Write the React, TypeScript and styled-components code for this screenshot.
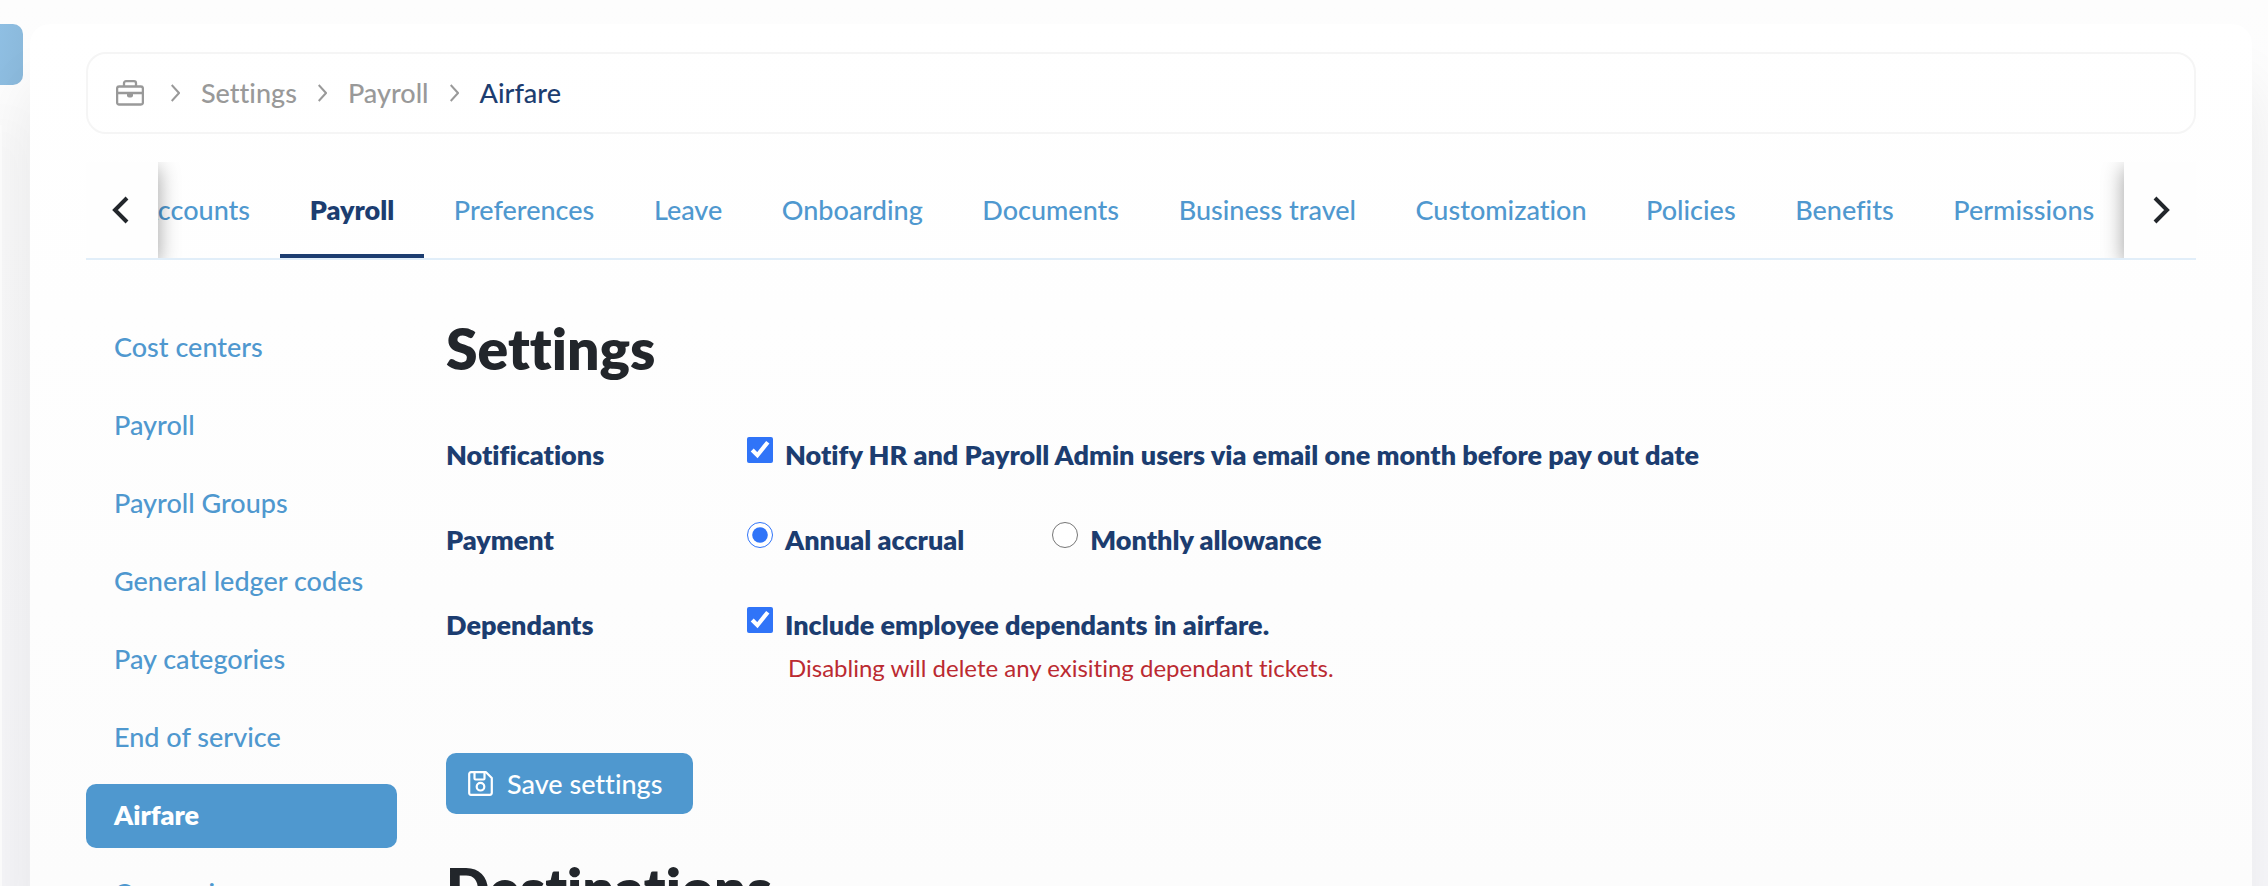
import React from "react";
import styled, { createGlobalStyle, css } from "styled-components";

const color = {
  blue: "#4f98cf",
  navy: "#1c3d70",
  ink: "#22262b",
  grey: "#999999",
  red: "#bb2a31",
  accent: "#3074f8",
};

const GlobalStyle = createGlobalStyle`
  *, *::before, *::after { box-sizing: border-box; }
  body {
    margin: 0;
    font-family: Lato, "Liberation Sans", sans-serif;
    font-size: 27px;
    font-weight: 500;
    font-variant-ligatures: no-common-ligatures;
    line-height: 36px;
    color: ${color.navy};
  }
  a { color: inherit; text-decoration: none; }
  button { font: inherit; font-variant-ligatures: inherit; border: 0; padding: 0; cursor: pointer; }
`;

const Page = styled.div`
  height: 100vh;
  padding-top: 24px;
  overflow: hidden;
  display: flex;
  background: linear-gradient(#fdfdfd, #f9f9fc);
`;

const Workspace = styled.div`
  flex: 1;
  min-width: 0;
  display: flex;
  gap: 7px;
  padding-right: 16px;
  overflow: hidden;
`;

const Rail = styled.aside`
  flex: none;
  width: 23px;
  display: flex;
  flex-direction: column;
  gap: 40px;
`;

const RailButton = styled.button`
  position: relative;
  flex: none;
  height: 61px;
  border-radius: 0 10px 10px 0;
  background: linear-gradient(100deg, #8fbfe3, #8ab8da);
`;

const RailPanel = styled.div`
  flex: 1;
  width: 2px;
  background: #fdfdfd;
  box-shadow: 0 20px 50px 20px rgba(0, 0, 0, 0.03);
`;

const Card = styled.main`
  position: relative;
  flex: 1;
  min-width: 0;
  padding: 28px 56px;
  border-radius: 20px 20px 0 0;
  background: linear-gradient(#ffffff, #fcfcfc);
  box-shadow: 0 60px 60px rgba(0, 0, 0, 0.08);
`;

const Breadcrumb = styled.nav`
  height: 82px;
  padding: 0 28px;
  display: flex;
  align-items: center;
  gap: 21px;
  border: 2px solid #f5f5f5;
  border-radius: 20px;
  color: ${color.grey};

  svg { flex: none; }
`;

const HomeLink = styled.a`
  display: flex;
  margin-right: 6px;
`;

const CurrentCrumb = styled.span`
  color: ${color.navy};
`;

const TabBar = styled.div`
  height: 98px;
  margin-top: 28px;
  display: flex;
  border-bottom: 2px solid #e1eef9;
  overflow: hidden;
`;

const ScrollButton = styled.button`
  position: relative;
  z-index: 1;
  flex: none;
  width: 72px;
  display: flex;
  align-items: center;
  justify-content: center;
  color: ${color.ink};
  background: #fefefe;
  box-shadow: 0 6px 20px rgba(0, 0, 0, 0.38);
`;

const TabViewport = styled.div`
  flex: 1;
  min-width: 0;
  overflow: hidden;
  display: flex;
`;

const TabList = styled.nav`
  flex: 1 0 auto;
  margin-left: -48px;
  display: flex;
`;

const Tab = styled.a<{ $active?: boolean }>`
  flex: 1 0 auto;
  padding: 0 27px;
  display: flex;
  align-items: center;
  justify-content: center;
  color: ${color.blue};
  white-space: nowrap;
  ${(p) =>
    p.$active &&
    css`
      color: ${color.navy};
      font-weight: 800;
      box-shadow: inset 0 -4px ${color.navy};
    `}
`;

const Columns = styled.div`
  margin-top: 56px;
  display: grid;
  grid-template-columns: 311px 1fr;
  column-gap: 49px;
`;

const SideNav = styled.nav`
  display: flex;
  flex-direction: column;
  gap: 14px;
`;

const SideLink = styled.a<{ $active?: boolean }>`
  height: 64px;
  padding: 0 28px 2px;
  display: flex;
  align-items: center;
  border-radius: 10px;
  color: ${color.blue};
  white-space: nowrap;
  ${(p) =>
    p.$active &&
    css`
      background: ${color.blue};
      color: #ffffff;
      font-weight: 800;
    `}
`;

const Heading = styled.h2`
  margin: 0;
  font-size: 57px;
  font-weight: 800;
  line-height: 64px;
  color: ${color.ink};
`;

const Form = styled.form`
  margin: 57px 0 42px;
`;

const Field = styled.fieldset`
  margin: 0 0 49px;
  padding: 0;
  border: 0;
  font-weight: 800;
  display: grid;
  grid-template-columns: 301px 1fr;
`;

const Options = styled.div`
  display: flex;
  flex-wrap: wrap;
  gap: 8px 88px;
`;

const Option = styled.label`
  display: flex;
  align-items: flex-start;
  gap: 12px;

  input {
    flex: none;
    width: 26px;
    height: 26px;
    margin: 0;
    accent-color: ${color.accent};
  }
`;

const Warning = styled.p`
  flex-basis: 100%;
  margin: 0;
  padding-left: 41px;
  font-size: 24px;
  font-weight: 400;
  line-height: 34px;
  color: ${color.red};
`;

const SaveButton = styled.button`
  margin-top: 68px;
  height: 61px;
  min-width: 247px;
  padding: 0 22px;
  display: flex;
  align-items: center;
  gap: 14px;
  border-radius: 10px;
  background: ${color.blue};
  color: #ffffff;
`;

const BriefcaseIcon = () => (
  <svg width="28" height="26" viewBox="0 0 28 26" fill="none" stroke="currentColor" strokeWidth="2.3" aria-hidden="true">
    <rect x="1.100" y="6.500" width="25.800" height="18" rx="2" />
    <path d="M8 6.500V3.200a2 2 0 0 1 2-2h8a2 2 0 0 1 2 2v3.300M1 13h26" />
    <path d="M11 13h6v2.500a2 2 0 0 1-2 2h-2a2 2 0 0 1-2-2z" fill="currentColor" stroke="none" />
  </svg>
);

const CrumbArrow = () => (
  <svg width="9" height="18" viewBox="0 0 9 18" fill="none" stroke="currentColor" strokeWidth="2" aria-hidden="true">
    <path d="M.7 1l7.300 8-7.300 8" />
  </svg>
);

const Arrow = ({ d }: { d: string }) => (
  <svg width="20" height="28" viewBox="0 0 20 28" fill="none" stroke="currentColor" strokeWidth="4" aria-hidden="true">
    <path d={d} />
  </svg>
);

const SaveIcon = () => (
  <svg width="25" height="25" viewBox="0 0 25 25" fill="none" stroke="currentColor" strokeWidth="2.2" strokeLinejoin="round" aria-hidden="true">
    <path d="M3 1.200h15l5.800 5.800v14.800a2 2 0 0 1-2 2H3a1.800 1.800 0 0 1-1.800-2V3a1.800 1.800 0 0 1 1.800-1.800z" />
    <path d="M6.500 1v6.500a1 1 0 0 0 1 1h8a1 1 0 0 0 1-1V1" />
    <circle cx="12.500" cy="15.700" r="3.800" />
  </svg>
);

const tabs = [
  "Accounts", "Payroll", "Preferences", "Leave", "Onboarding", "Documents",
  "Business travel", "Customization", "Policies", "Benefits", "Permissions",
];

const sections = [
  "Cost centers", "Payroll", "Payroll Groups", "General ledger codes",
  "Pay categories", "End of service", "Airfare", "Currencies",
];

export default function App() {
  return (
    <>
      <GlobalStyle />
      <Page>
        <Workspace>
          <Rail>
            <RailButton type="button" aria-label="Open menu" />
            <RailPanel />
          </Rail>
          <Card>
            <Breadcrumb aria-label="Breadcrumb">
              <HomeLink href="#home" aria-label="Home"><BriefcaseIcon /></HomeLink>
              <CrumbArrow />
              <a href="#settings">Settings</a>
              <CrumbArrow />
              <a href="#payroll">Payroll</a>
              <CrumbArrow />
              <CurrentCrumb aria-current="page">Airfare</CurrentCrumb>
            </Breadcrumb>

            <TabBar>
              <ScrollButton type="button" aria-label="Previous tabs"><Arrow d="M15 2L3 14l12 12" /></ScrollButton>
              <TabViewport>
                <TabList aria-label="Settings sections">
                  {tabs.map((t) => (
                    <Tab key={t} href="#tab" $active={t === "Payroll"}>{t}</Tab>
                  ))}
                </TabList>
              </TabViewport>
              <ScrollButton type="button" aria-label="Next tabs"><Arrow d="M5 2l12 12L5 26" /></ScrollButton>
            </TabBar>

            <Columns>
              <SideNav aria-label="Payroll sections">
                {sections.map((s) => (
                  <SideLink key={s} href="#section" $active={s === "Airfare"}>{s}</SideLink>
                ))}
              </SideNav>
              <section>
                <Heading>Settings</Heading>
                <Form>
                  <Field aria-labelledby="notifications">
                    <span id="notifications">Notifications</span>
                    <Options>
                      <Option>
                        <input type="checkbox" defaultChecked />
                        Notify HR and Payroll Admin users via email one month before pay out date
                      </Option>
                    </Options>
                  </Field>
                  <Field aria-labelledby="payment">
                    <span id="payment">Payment</span>
                    <Options>
                      <Option><input type="radio" name="payment" defaultChecked />Annual accrual</Option>
                      <Option><input type="radio" name="payment" />Monthly allowance</Option>
                    </Options>
                  </Field>
                  <Field aria-labelledby="dependants">
                    <span id="dependants">Dependants</span>
                    <Options>
                      <Option><input type="checkbox" defaultChecked />Include employee dependants in airfare.</Option>
                      <Warning>Disabling will delete any exisiting dependant tickets.</Warning>
                    </Options>
                  </Field>
                  <SaveButton type="button"><SaveIcon />Save settings</SaveButton>
                </Form>
                <Heading>Destinations</Heading>
              </section>
            </Columns>
          </Card>
        </Workspace>
      </Page>
    </>
  );
}
